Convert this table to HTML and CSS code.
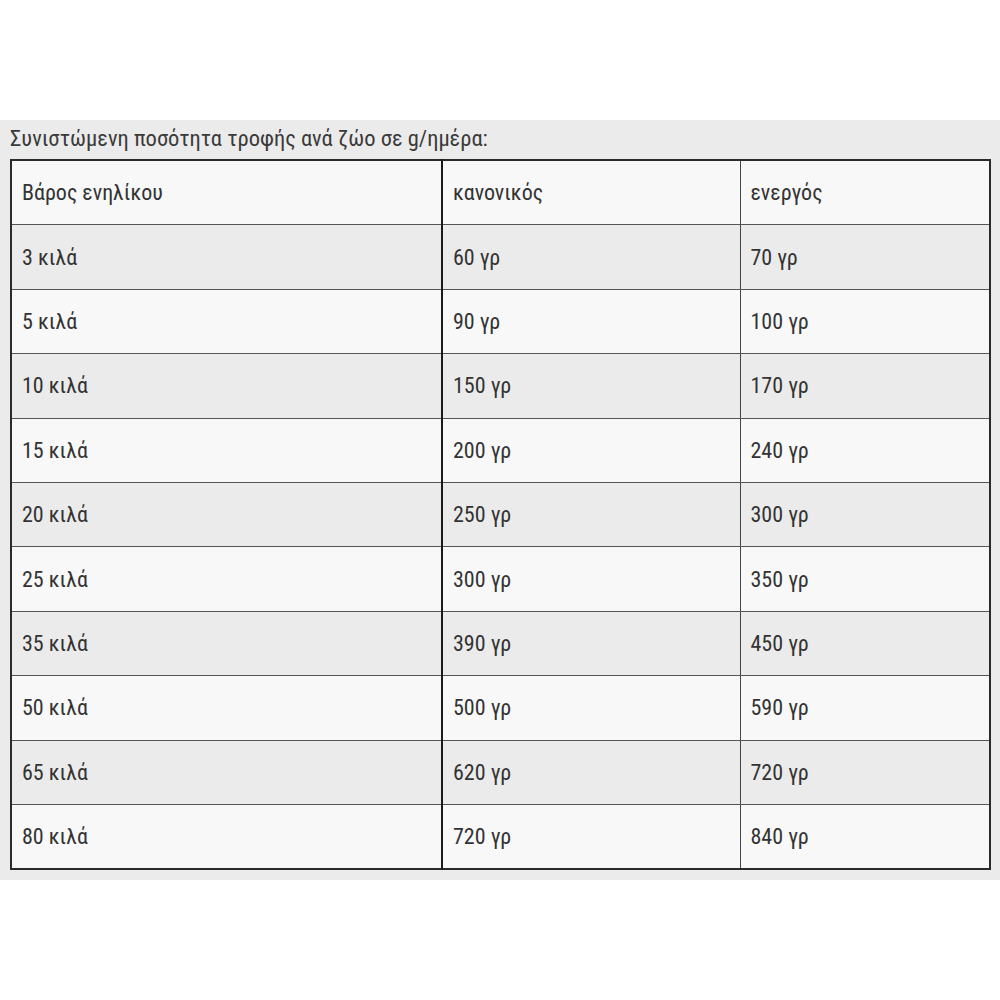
FILE: index.html
```html
<!DOCTYPE html>
<html lang="el">
<head>
<meta charset="utf-8">
<title>Ποσότητα τροφής</title>
<link rel="stylesheet" href="styles.css">
</head>
<body>
<section class="panel">
  <p class="caption">Συνιστώμενη ποσότητα τροφής ανά ζώο σε g/ημέρα:</p>
  <table class="feed">
    <colgroup>
      <col class="c1"><col class="c2"><col class="c3">
    </colgroup>
    <tbody>
      <tr class="head"><td>Βάρος ενηλίκου</td><td>κανονικός</td><td>ενεργός</td></tr>
      <tr class="alt"><td>3 κιλά</td><td>60 γρ</td><td>70 γρ</td></tr>
      <tr><td>5 κιλά</td><td>90 γρ</td><td>100 γρ</td></tr>
      <tr class="alt"><td>10 κιλά</td><td>150 γρ</td><td>170 γρ</td></tr>
      <tr><td>15 κιλά</td><td>200 γρ</td><td>240 γρ</td></tr>
      <tr class="alt"><td>20 κιλά</td><td>250 γρ</td><td>300 γρ</td></tr>
      <tr><td>25 κιλά</td><td>300 γρ</td><td>350 γρ</td></tr>
      <tr class="alt"><td>35 κιλά</td><td>390 γρ</td><td>450 γρ</td></tr>
      <tr><td>50 κιλά</td><td>500 γρ</td><td>590 γρ</td></tr>
      <tr class="alt"><td>65 κιλά</td><td>620 γρ</td><td>720 γρ</td></tr>
      <tr><td>80 κιλά</td><td>720 γρ</td><td>840 γρ</td></tr>
    </tbody>
  </table>
</section>
</body>
</html>
```
FILE: styles.css
```css
html, body {
  margin: 0;
  padding: 0;
  background: #ffffff;
}
body {
  font-family: Roboto, "Noto Sans", sans-serif;
  font-stretch: 80%;
  color: #333333;
}
.panel {
  margin-top: 120px;
  background: #ebebeb;
  padding: 0 11px 10px 10px;
}
.caption {
  margin: 0;
  height: 39px;
  line-height: 36px;
  font-size: 22.5px;
  color: #3a3a3a;
}
.feed {
  width: 979px;
  border-collapse: collapse;
  table-layout: fixed;
  border: 2px solid #2a2a2a;
  font-size: 22px;
}
.c1 { width: 431px; }
.c2 { width: 298px; }
.c3 { width: 250px; }
.feed td {
  height: 63.4px;
  padding: 0 10px;
  border-top: 1px solid #555;
  border-bottom: 1px solid #555;
  border-left: 1px solid #444;
  vertical-align: middle;
  background: #f8f8f8;
}
.feed td:nth-child(2) {
  border-left: 2px solid #1a1a1a;
}
.feed tr.alt td {
  background: #ebebeb;
}
```
